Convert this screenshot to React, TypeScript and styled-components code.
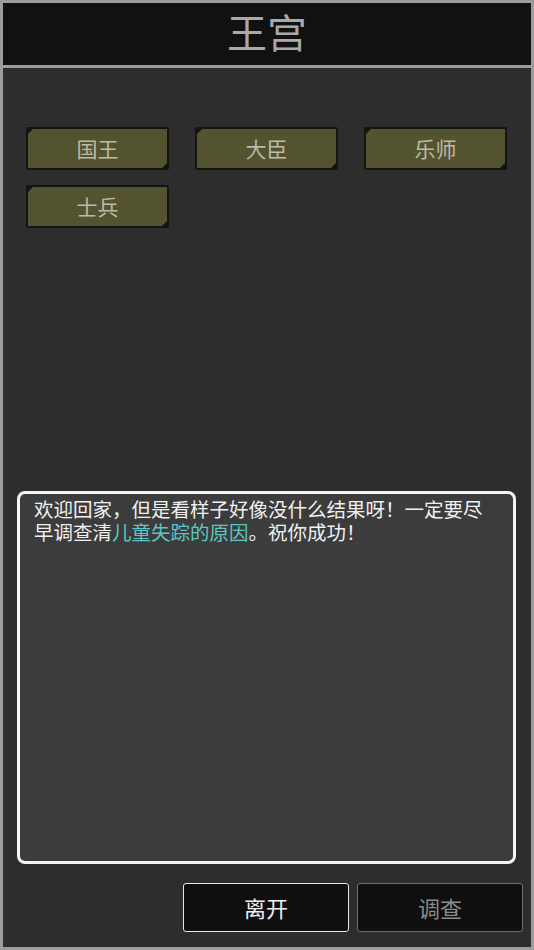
import styled, { createGlobalStyle } from 'styled-components';

const GlobalStyle = createGlobalStyle`
	html,
	body {
		margin: 0;
		padding: 0;
		background: #2d2d2d;
	}
	* {
		box-sizing: border-box;
	}
	body {
		font-family: 'Noto Sans CJK SC', 'Noto Sans', sans-serif;
	}
`;

const Frame = styled.div`
	width: 534px;
	height: 950px;
	border: 3px solid #9c9c9c;
	display: flex;
	flex-direction: column;
	background: #2d2d2d;
`;

const Header = styled.div`
	height: 65px;
	flex-shrink: 0;
	background: #111111;
	border-bottom: 3px solid #9c9c9c;
	display: flex;
	align-items: center;
	justify-content: center;
	color: #a9a9a9;
	font-size: 40px;
	line-height: 1;
	padding-bottom: 6px;
`;

const Body = styled.div`
	flex: 1;
	display: flex;
	flex-direction: column;
	padding: 59px 0 15px;
`;

const PersonGrid = styled.div`
	display: grid;
	grid-template-columns: repeat(3, 143px);
	column-gap: 26px;
	row-gap: 15px;
	padding-left: 23px;
`;

const PersonButton = styled.div`
	height: 43px;
	padding: 2px;
	background: #141414;
	border-radius: 2px;
`;

const PersonFace = styled.div`
	height: 100%;
	background: #53532f;
	clip-path: polygon(5px 0, 100% 0, 100% calc(100% - 5px), calc(100% - 5px) 100%, 0 100%, 0 5px);
	display: flex;
	align-items: center;
	justify-content: center;
	color: #bcbaa9;
	font-size: 21px;
	padding-bottom: 1px;
`;

const Spacer = styled.div`
	flex: 1;
`;

const DialogBox = styled.div`
	height: 373px;
	margin: 0 15px 0 14px;
	border: 3px solid #f4f4f4;
	border-radius: 8px;
	background: #3c3c3c;
	padding: 3px 16px 0 14px;
	color: #f0f0f0;
	font-size: 19.5px;
	line-height: 23px;
`;

const Highlight = styled.span`
	color: #5cc6c4;
`;

const ActionRow = styled.div`
	display: flex;
	justify-content: flex-end;
	gap: 8px;
	margin-top: 19px;
	padding-right: 8px;
`;

const ActionButton = styled.div<{ $disabled?: boolean }>`
	width: 166px;
	height: 49px;
	background: #0f0f0f;
	border: 1.5px solid ${(p) => (p.$disabled ? '#6f6f6f' : '#e6e6e6')};
	border-radius: 3px;
	display: flex;
	align-items: center;
	justify-content: center;
	color: ${(p) => (p.$disabled ? '#8c8c8c' : '#f0f0f0')};
	font-size: 22px;
	padding-bottom: 2px;
`;

const people = ['国王', '大臣', '乐师', '士兵'];

const App = () => {
	return (
		<>
			<GlobalStyle />
			<Frame>
				<Header>王宫</Header>
				<Body>
					<PersonGrid>
						{people.map((name) => (
							<PersonButton key={name}>
								<PersonFace>{name}</PersonFace>
							</PersonButton>
						))}
					</PersonGrid>
					<Spacer />
					<DialogBox>
						欢迎回家，但是看样子好像没什么结果呀！一定要尽早调查清
						<Highlight>儿童失踪的原因</Highlight>。祝你成功！
					</DialogBox>
					<ActionRow>
						<ActionButton>离开</ActionButton>
						<ActionButton $disabled>调查</ActionButton>
					</ActionRow>
				</Body>
			</Frame>
		</>
	);
};

export default App;
